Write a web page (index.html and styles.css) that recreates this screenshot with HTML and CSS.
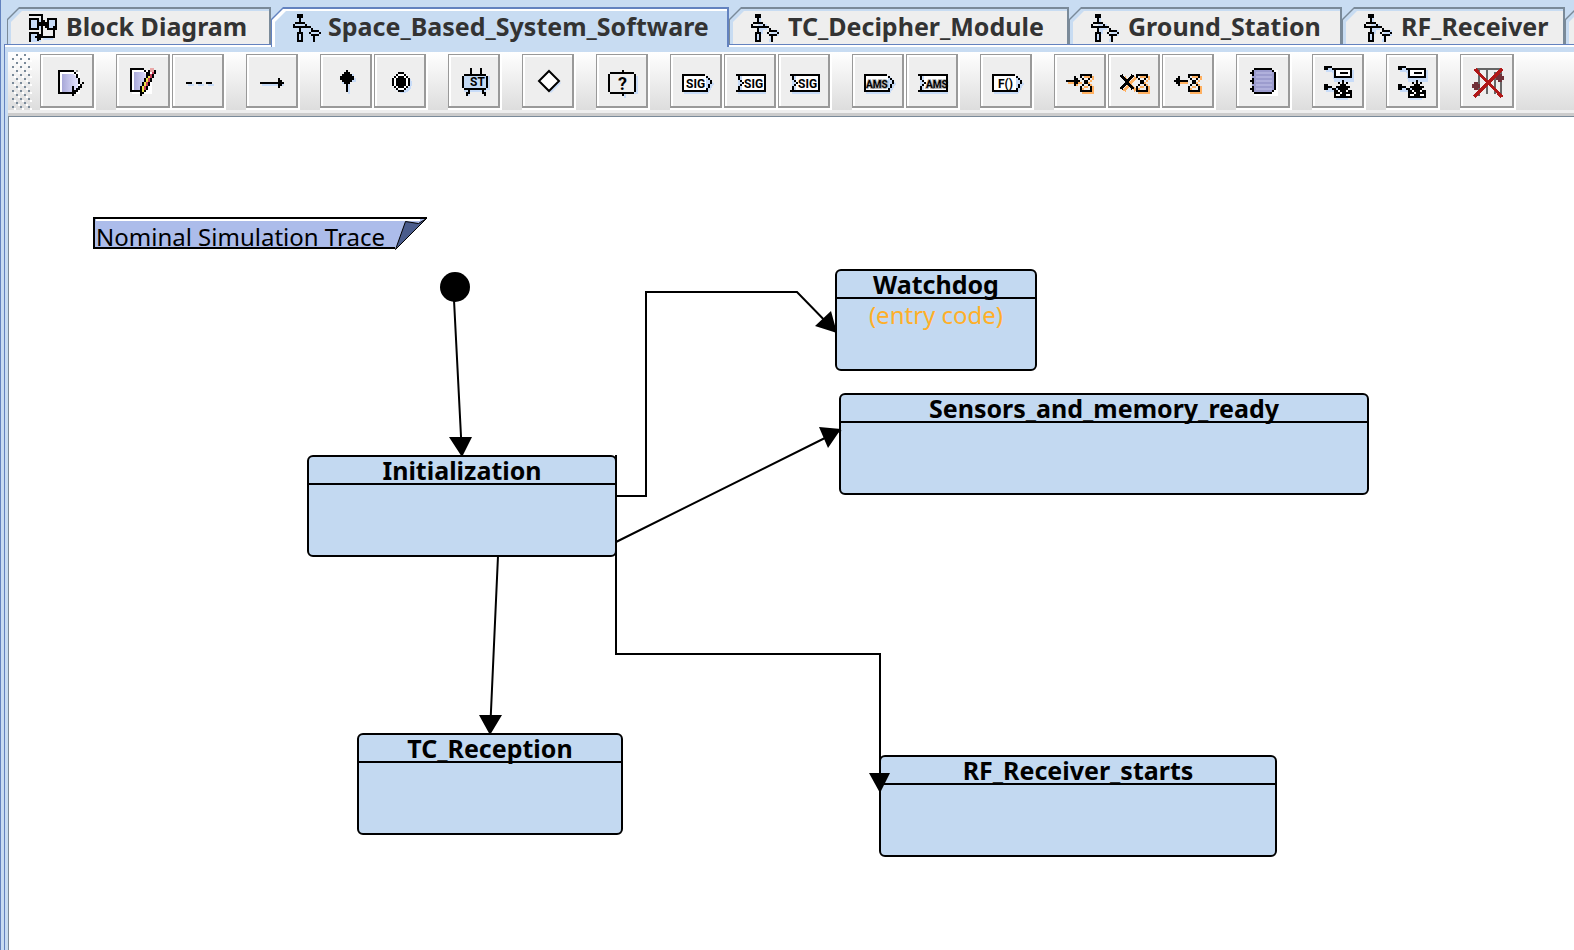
FILE: index.html
```
<!DOCTYPE html>
<html lang="en">
<head>
<meta charset="utf-8">
<meta name="viewport" content="width=device-width, initial-scale=1">
<title>Space_Based_System_Software</title>
<link rel="stylesheet" href="styles.css">
</head>
<body>
<svg class="defs" aria-hidden="true">
  <symbol id="i-machine" viewBox="0 0 15 15">
    <path class="shade" d="M3 2h2v3h3v3h-2v2h-2zM10 8h4v3h-3v3h-2zM3 10h2v4h-2z"/>
    <path class="solid" d="M2 0h3v2h-3zM3 2h1v2h-1zM1 4h5v1h-5zM0 5h1v2h-1zM6 5h1v2h-1zM1 7h5v-1h-5zM7 6h2v1h-2zM9 7h1v1h-1zM3 7h1v2h-1zM2 9h3v1h-3zM2 10h1v3h-1zM4 10h1v3h-1zM2 13h3v1h-3zM9 8h4v1h-4zM8 9h1v1h-1zM13 9h1v1h-1zM9 10h4v1h-4zM10 11h1v3h-1z"/>
  </symbol>
  <symbol id="i-blocks" viewBox="0 0 15 15">
    <path class="shade" d="M1 3h5v5h-5zM10 3h4v5h-4zM1 10h5v4h-5zM7 12h5v1h-5z"/>
    <path class="line" d="M0 .5h6.500v11M.5 2.500h4v5h-4zM9.500 2.500h4v5h-4zM.5 14v-4.500h4v4M5 4.500h4M5 11.500h7.500v-4"/>
    <path class="solid" d="M4 4h2v2h-2zM7 3h1v3h-1zM8 4h1v2h-1zM8 5h2v2h-2zM12 6h2v2h-2zM4 10h2v3h-2zM3 11h1v1h-1z"/>
  </symbol>
  <symbol id="i-hourglass" viewBox="0 0 8 10">
    <path class="amber" d="M6 1h1v2h-1zM5 3h1v1h-1zM4 4h1v1h-1zM5 5h1v1h-1zM6 6h1v3h-1zM1 9h6v1h-6zM2 6h2v1h-2zM1 7h1v1h-1zM2 1h3v1h-3z"/>
    <path class="line" d="M0 .5h6M.5 1v1M5.500 1v1M1.500 2v1M4.500 2v1M2.500 3v2M3.500 3v2M1.500 5v1M4.500 5v1M.5 6v2M5.500 6v2M0 8.500h6"/>
  </symbol>
  <symbol id="i-import" viewBox="0 0 28 28">
    <path class="shade" d="M7 7h4v2h-4zM10 8h11v6h-10zM7 17h11v6h-6v-4h-5z"/>
    <path class="paper" d="M12 8h7v4h-7z"/>
    <path class="line" d="M8 6.500h2M10.500 7v1M11.500 7.500h8v4h-8zM14 9.500h4"/>
    <path class="solid" d="M6 6h2v2h-2zM6 15h2v3h-2zM8 16h2v1h-2zM10 17h2v1h-2zM15 13h1v6h-1zM13 14h1v1h-1zM17 14h1v1h-1zM14 15h3v3h-3zM12 16h7v1h-7zM13 17h5v1h-5zM11 18h9v4h-9z"/>
    <path class="paper" d="M13 19h1v-1h-1zM17 18h1v1h-1zM12 20h2v1h-2zM17 20h2v1h-2zM14 19h1v1h-1z"/>
  </symbol>
  <symbol id="i-send" viewBox="0 0 28 28">
    <path class="shade" d="M7 11h12l3 4-3 5h-12z"/>
    <path class="paper" d="M7 11h11v8h-11z"/>
    <path class="line" d="M6.500 10.500h11M6.500 10v9M6 18.500h12M18.500 11v1M19.500 12v1M20.500 13v2M19.500 15v2M18.500 17v2"/>
  </symbol>
  <symbol id="i-receive" viewBox="0 0 28 28">
    <path class="shade" d="M7 11h14v9h-14z"/>
    <path class="paper" d="M9 11h11v7h-11z"/>
    <path class="line" d="M6 10.500h14.500v8h-14.500M7.500 11v2M8.500 13v1M9.500 14v1M8.500 15v1M7.500 16v2"/>
  </symbol>
</svg>

<div class="window">
  <div class="tabs" role="tablist">
    <button class="tab" role="tab"><svg class="tab-icon"><use href="#i-blocks"/></svg><span>Block Diagram</span></button>
    <button class="tab active" role="tab" aria-selected="true"><svg class="tab-icon"><use href="#i-machine"/></svg><span>Space_Based_System_Software</span></button>
    <button class="tab" role="tab"><svg class="tab-icon"><use href="#i-machine"/></svg><span>TC_Decipher_Module</span></button>
    <button class="tab" role="tab"><svg class="tab-icon"><use href="#i-machine"/></svg><span>Ground_Station</span></button>
    <button class="tab" role="tab"><svg class="tab-icon"><use href="#i-machine"/></svg><span>RF_Receiver</span></button>
    <button class="tab" role="tab" aria-label="More"></button>
  </div>

  <div class="panel">
    <div class="toolbar" role="toolbar">
      <svg class="grip" aria-hidden="true"><defs><pattern id="dots" width="8" height="8" patternUnits="userSpaceOnUse"><path class="dot-dark" d="M0 4h2v2h-2zM4 0h2v2h-2z"/><path class="dot-light" d="M2 6h2v2h-2zM6 2h2v2h-2z"/></pattern></defs><rect width="100%" height="100%" fill="url(#dots)"/></svg>

      <div class="group">
        <button class="tool wide" aria-label="Check"><svg viewBox="0 0 28 28">
          <defs><linearGradient id="sheet"><stop offset="0" stop-color="#a8a8d8"/><stop offset="1" stop-color="#e4e4ff"/></linearGradient></defs>
          <path fill="#fff" d="M10 9h10v11h-10z"/><path fill="url(#sheet)" d="M11 10h6l2 3v5h-3v1h-5z"/>
          <path fill="#999" d="M18 8h1v1h-1z"/>
          <path class="line" d="M9 8.500h8M9.500 8v12M9 19.500h7M17.500 9v1M18.500 10v2M19.500 12v3M16.500 16v5M17.500 18v2M18.500 17v2M19.500 16v2M20.500 15v2M21.500 14v1"/></svg></button>
      </div>
      <div class="group">
        <button class="tool wide" aria-label="Edit"><svg viewBox="0 0 28 28">
          <path fill="#fff" d="M8 8h10v12h-10z"/><path fill="url(#sheet)" d="M9 9h5l2 3v2l-3 5h-4z"/>
          <path class="line" d="M7 7.500h7M7.500 7v12M7 18.500h5M14.500 8v1M15.500 9v2M16.500 8v3M15.500 10v3M14.500 12v2M13.500 14v3M12.500 16v5M13.500 19v1M14.500 18v1M15.500 16v2M16.500 14v2M17.500 12v2M18.500 10v2M19.500 8v2"/>
          <path fill="#e9a7a7" d="M17 7h2v2h-2z"/><path fill="#c7405a" d="M18 9h1v1h-1zM17 10h1v2h-1zM16 12h1v2h-1zM15 14h1v2h-1zM14 16h1v2h-1z"/><path fill="#efe34b" d="M16 11h1v1h-1zM15 12h1v2h-1zM14 14h1v2h-1zM13 16h1v3h-1z"/></svg></button>
        <button class="tool" aria-label="Comment link"><svg viewBox="0 0 27 28"><path class="shade" d="M8 15h3v1h-3zM13 15h3v1h-3zM18 15h3v1h-3z"/><path class="solid" d="M7 14h3v1h-3zM12 14h3v1h-3zM17 14h3v1h-3z"/></svg></button>
      </div>
      <div class="group">
        <button class="tool" aria-label="Transition"><svg viewBox="0 0 27 28"><path class="shade" d="M8 15h11v1h-2v1h-1v-1h-8z"/><path class="solid" d="M7 14h12v1h-12zM16 12h1v5h-1zM17 13h1v3h-1z"/></svg></button>
      </div>
      <div class="group">
        <button class="tool" aria-label="Start state"><svg viewBox="0 0 27 28"><path class="shade" d="M11 10h6v2h1v2h-3v6h-1v-5h-3z"/><path class="solid" d="M13 8h1v11h-1zM12 9h3v6h-3zM11 10h5v4h-5zM10 11h7v2h-7z"/></svg></button>
        <button class="tool" aria-label="Stop state"><svg viewBox="0 0 27 28"><circle class="shade" cx="14.500" cy="15" r="4.500"/><circle class="paper" cx="13.500" cy="14" r="4.500"/><path class="line" d="M12 9.500h3M12 18.500h3M9.500 12v4M17.500 12v4M10.500 11v1M11.500 10v1M15.500 10v1M16.500 11v1M10.500 16v1M11.500 17v1M15.500 17v1M16.500 16v1"/><path class="solid" d="M12 11h3v6h-3zM11 12h5v4h-5z"/></svg></button>
      </div>
      <div class="group">
        <button class="tool" aria-label="State"><svg viewBox="0 0 27 28"><path class="shade" d="M8 11h13v7h-2v3h-1v-2h-7v2h-1v-2h-2z"/><path fill="#c3d9f3" d="M8 11h11v7h-11z"/><path class="line" d="M8 10.500h11M8 17.500h11M7.500 11v6M19.500 11v6M11.500 7v3M16.500 7v3M10.500 18v2M9.500 19v2M17.500 18v2M18.500 19v2"/><text x="11" y="16" class="glyph">ST</text></svg></button>
      </div>
      <div class="group">
        <button class="tool" aria-label="Choice"><svg class="smooth" viewBox="0 0 27 28"><path class="shade" d="M14.500 9.500l5 5-5 5-5-5z"/><path class="outlined" d="M13.500 8.500l5 5-5 5-5-5z"/></svg></button>
      </div>
      <div class="group">
        <button class="tool" aria-label="Random"><svg viewBox="0 0 27 28"><path class="shade" d="M8 11h13v9h-13zM14 20h1v2h-1z"/><path fill="#eee" d="M7 10h12v9h-12z"/><path class="line" d="M7 9.500h12M7 19.500h12M6.500 10v9M19.500 10v9M13.500 8v1M13.500 20v1"/><text x="11" y="18" class="glyph big">?</text></svg></button>
      </div>
      <div class="group">
        <button class="tool" aria-label="Send signal"><svg viewBox="0 0 27 28"><use href="#i-send" width="28" height="28"/><text x="8" y="17" class="glyph">SIG</text></svg></button>
        <button class="tool" aria-label="Receive signal"><svg viewBox="0 0 27 28"><use href="#i-receive" width="28" height="28"/><text x="10" y="17" class="glyph">SIG</text></svg></button>
        <button class="tool" aria-label="Save signal"><svg viewBox="0 0 27 28"><use href="#i-receive" width="28" height="28"/><text x="10" y="17" class="glyph">SIG</text></svg></button>
      </div>
      <div class="group">
        <button class="tool" aria-label="Send AMS"><svg viewBox="0 0 27 28"><use href="#i-send" width="28" height="28"/><text x="7" y="17" class="glyph heavy">AMS</text></svg></button>
        <button class="tool" aria-label="Receive AMS"><svg viewBox="0 0 27 28"><use href="#i-receive" width="28" height="28"/><text x="10" y="17" class="glyph heavy">AMS</text></svg></button>
      </div>
      <div class="group">
        <button class="tool" aria-label="Call function"><svg viewBox="0 0 27 28"><use href="#i-send" width="28" height="28"/><text x="9" y="17" class="glyph">F()</text></svg></button>
      </div>
      <div class="group">
        <button class="tool" aria-label="Set timer"><svg viewBox="0 0 27 28"><path class="amber" d="M7 14h7v1h-2v1h-1v-1h-4z"/><path class="solid" d="M6 13h7v1h-7zM10 11h1v5h-1zM11 12h1v3h-1z"/><use href="#i-hourglass" x="13" y="10" width="8" height="10"/></svg></button>
        <button class="tool" aria-label="Reset timer"><svg viewBox="0 0 27 28"><path class="amber-line" d="M8 11.500l6 7M14 11.500l-6 7"/><path class="line thick" d="M6.500 10.500l6 7M12.500 10.500l-6 7"/><use href="#i-hourglass" x="14" y="10" width="8" height="10"/></svg></button>
        <button class="tool" aria-label="Timer expiration"><svg viewBox="0 0 27 28"><path class="amber" d="M7 14h6v1h-4v1h-1v-1h-1z"/><path class="solid" d="M6 13h7v1h-7zM8 11h1v5h-1zM7 12h1v3h-1z"/><use href="#i-hourglass" x="13" y="10" width="8" height="10"/></svg></button>
      </div>
      <div class="group">
        <button class="tool wide" aria-label="Library"><svg viewBox="0 0 28 28"><path fill="#fff" d="M9 8h12v13h-12z"/><path fill="#9c9cce" d="M8 8h11v11h-11z"/><path stroke="#b0b0dc" d="M10 9.500h8M10 11.500h8M10 13.500h8M10 15.500h8M10 17.500h8"/><path class="line" d="M9 7.500h9M9 19.500h9M19.500 9v9M18.500 8v1M18.500 18v1M8.500 8v3M7.500 9v1M8.500 12v3M7.500 13v1M8.500 16v3M7.500 17v1"/></svg></button>
      </div>
      <div class="group">
        <button class="tool" aria-label="Import composite"><svg viewBox="0 0 27 28"><use href="#i-import" width="28" height="28"/></svg></button>
      </div>
      <div class="group">
        <button class="tool" aria-label="Import library"><svg viewBox="0 0 27 28"><use href="#i-import" width="28" height="28"/></svg></button>
      </div>
      <div class="group">
        <button class="tool wide" aria-label="Remove attributes"><svg viewBox="0 0 28 28"><path stroke="#666" d="M8 7.500h13M9.500 7v14M13.500 7v13M17.500 9v11M20.500 8v12"/><path fill="#703038" d="M6 15h4v2h-4zM7 14h2v4h-2zM18 11h4v2h-4zM19 10h2v4h-2z"/><path stroke="#b01818" stroke-width="1.500" d="M7.500 7.500l13.500 14M21 7.500l-14 14"/></svg></button>
      </div>
    </div>

    <main class="canvas">
      <svg class="wires" viewBox="9 117 1565 833" width="1565" height="833" aria-hidden="true">
        <path fill="#acbcea" d="M94 218h332l-32 31h-300z"/>
        <path fill="none" stroke="#fff" stroke-width="2" d="M96 220h324"/>
        <path fill="none" stroke="#000" stroke-width="2" d="M427 218h-333v30h301"/>
        <path fill="#4a5c8c" stroke="#000" d="M405.500 221.500l13 2 8-5-31 31z"/>
      </svg>
      <p class="note">Nominal Simulation Trace</p>
      <section class="state init"><h2>Initialization</h2></section>
      <section class="state watchdog"><h2>Watchdog</h2><p>(entry code)</p></section>
      <section class="state sensors"><h2>Sensors_and_memory_ready</h2></section>
      <section class="state reception"><h2>TC_Reception</h2></section>
      <section class="state receiver"><h2>RF_Receiver_starts</h2></section>
      <svg class="wires" viewBox="9 117 1565 833" width="1565" height="833" aria-hidden="true">
        <circle cx="455" cy="287" r="15"/>
        <path class="wire" d="M454 300L462 456M498 556L490 733M616 542L841 430M616 496H646V292H797L836 332M616 455V654H880V775"/>
        <path d="M449 437h23l-10 20zM479 715h23l-12 20zM819 427l22 2-13 19zM831 311l6 22-22-7zM869 773h21l-10 20z"/>
      </svg>
    </main>
  </div>
</div>
</body>
</html>
```
FILE: styles.css
```
* { box-sizing: border-box; }

body {
  margin: 0;
  background: #c8dcf2;
  font-family: "Noto Sans", "Open Sans", sans-serif;
  color: #000;
}

.defs { position: absolute; width: 0; height: 0; }

.window {
  display: flex;
  flex-direction: column;
  min-height: 100vh;
  overflow: hidden;
  border-left: 1px solid #6382bf;
}

/* tab strip */
.tabs {
  display: grid;
  grid-template-columns: 264px 458px 340px 273px 223px 264px;
  height: 44px;
  padding: 7px 0 0 6px;
}

.tab {
  position: relative;
  z-index: 0;
  display: flex;
  align-items: flex-start;
  gap: 7px;
  height: 37px;
  padding: 2px 0 0 22px;
  border: 0;
  background: #7a8a99;
  clip-path: polygon(0 12px, 12px 0, 100% 0, 100% 100%, 0 100%);
  font: bold 25px/34px "Noto Sans", "Open Sans", sans-serif;
  color: #333;
  white-space: nowrap;
}

.tab::before,
.tab::after {
  content: "";
  position: absolute;
  z-index: -1;
  clip-path: polygon(0 11px, 11px 0, 100% 0, 100% 100%, 0 100%);
}

.tab::before { inset: 2px 2px 0 1px; background: #c8dcf2; }
.tab::after { inset: 4px 2px 0 4px; background: #eee; }

.tab.active {
  z-index: 1;
  height: 40px;
  gap: 5px;
  background: #6382bf;
}

.tab.active::before { background: #fff; }
.tab.active::after { background: #c8dcf2; }

.tab-icon {
  width: 30px;
  height: 30px;
  margin-top: 5px;
  shape-rendering: crispEdges;
}

/* tab content */
.panel {
  flex: 1;
  display: flex;
  flex-direction: column;
  margin-left: 3px;
  padding: 7px 0 0 3px;
  border: solid #6382bf;
  border-width: 1px 0 0 1px;
  box-shadow: inset 0 2px #fff;
}

.toolbar {
  display: flex;
  align-items: flex-start;
  gap: 20px;
  height: 64px;
  padding: 2px 0 0 4px;
  border-bottom: 3px solid #ccc;
  background: linear-gradient(#fff, #ddd 58px, #eee 58px);
}

.grip { width: 20px; height: 56px; margin-right: -12px; }
.dot-dark { fill: #7a8a99; }
.dot-light { fill: #fff; }

.group { display: flex; }

.tool {
  width: 54px;
  height: 56px;
  padding: 0;
  border: 0;
  background: #eee;
  box-shadow: inset -2px -2px #fff, inset 1px 1px #999, inset -4px -4px #999, inset 3px 3px #fff;
}

.tool.wide { width: 56px; }

.tool svg {
  display: block;
  width: 100%;
  height: 100%;
  shape-rendering: crispEdges;
}

.tool svg.smooth { shape-rendering: auto; }

.line { fill: none; stroke: #000; stroke-width: 1; }
.line.thick { stroke-width: 1.5; }
.outlined { fill: #fff; stroke: #000; stroke-width: 1; }
.solid { fill: #000; }
.shade { fill: #c8dcf8; }
.paper { fill: #fff; }
.amber { fill: #ffb060; }
.amber-line { fill: none; stroke: #ffb060; stroke-width: 1.5; }

.glyph { font: bold 6px Roboto, sans-serif; }
.glyph.heavy { font-size: 5px; stroke: #000; stroke-width: 1px; stroke-opacity: 0.3; }
.glyph.big { font-size: 9px; }

/* diagram */
.canvas {
  position: relative;
  flex: 1;
  min-height: 780px;
  border: solid #7a8a99;
  border-width: 1px 0 0 1px;
  background: #fff;
  overflow: hidden;
}

.wires { position: absolute; left: 0; top: 0; }
.wire { fill: none; stroke: #000; stroke-width: 2; }

.note {
  position: absolute;
  left: 87px;
  top: 103px;
  margin: 0;
  font-size: 24px;
  line-height: 33px;
}

.state {
  position: absolute;
  height: 102px;
  border: 2px solid #000;
  border-radius: 6px;
  background: #c3d9f1;
  text-align: center;
}

.state h2 {
  margin: 0;
  border-bottom: 2px solid #000;
  font-size: 25px;
  line-height: 26px;
}

.state p {
  margin: 0;
  font-size: 24px;
  line-height: 32px;
  color: #ffaf28;
}

.init { left: 298px; top: 338px; width: 310px; }
.watchdog { left: 826px; top: 152px; width: 202px; }
.sensors { left: 830px; top: 276px; width: 530px; }
.reception { left: 348px; top: 616px; width: 266px; }
.receiver { left: 870px; top: 638px; width: 398px; }
```
